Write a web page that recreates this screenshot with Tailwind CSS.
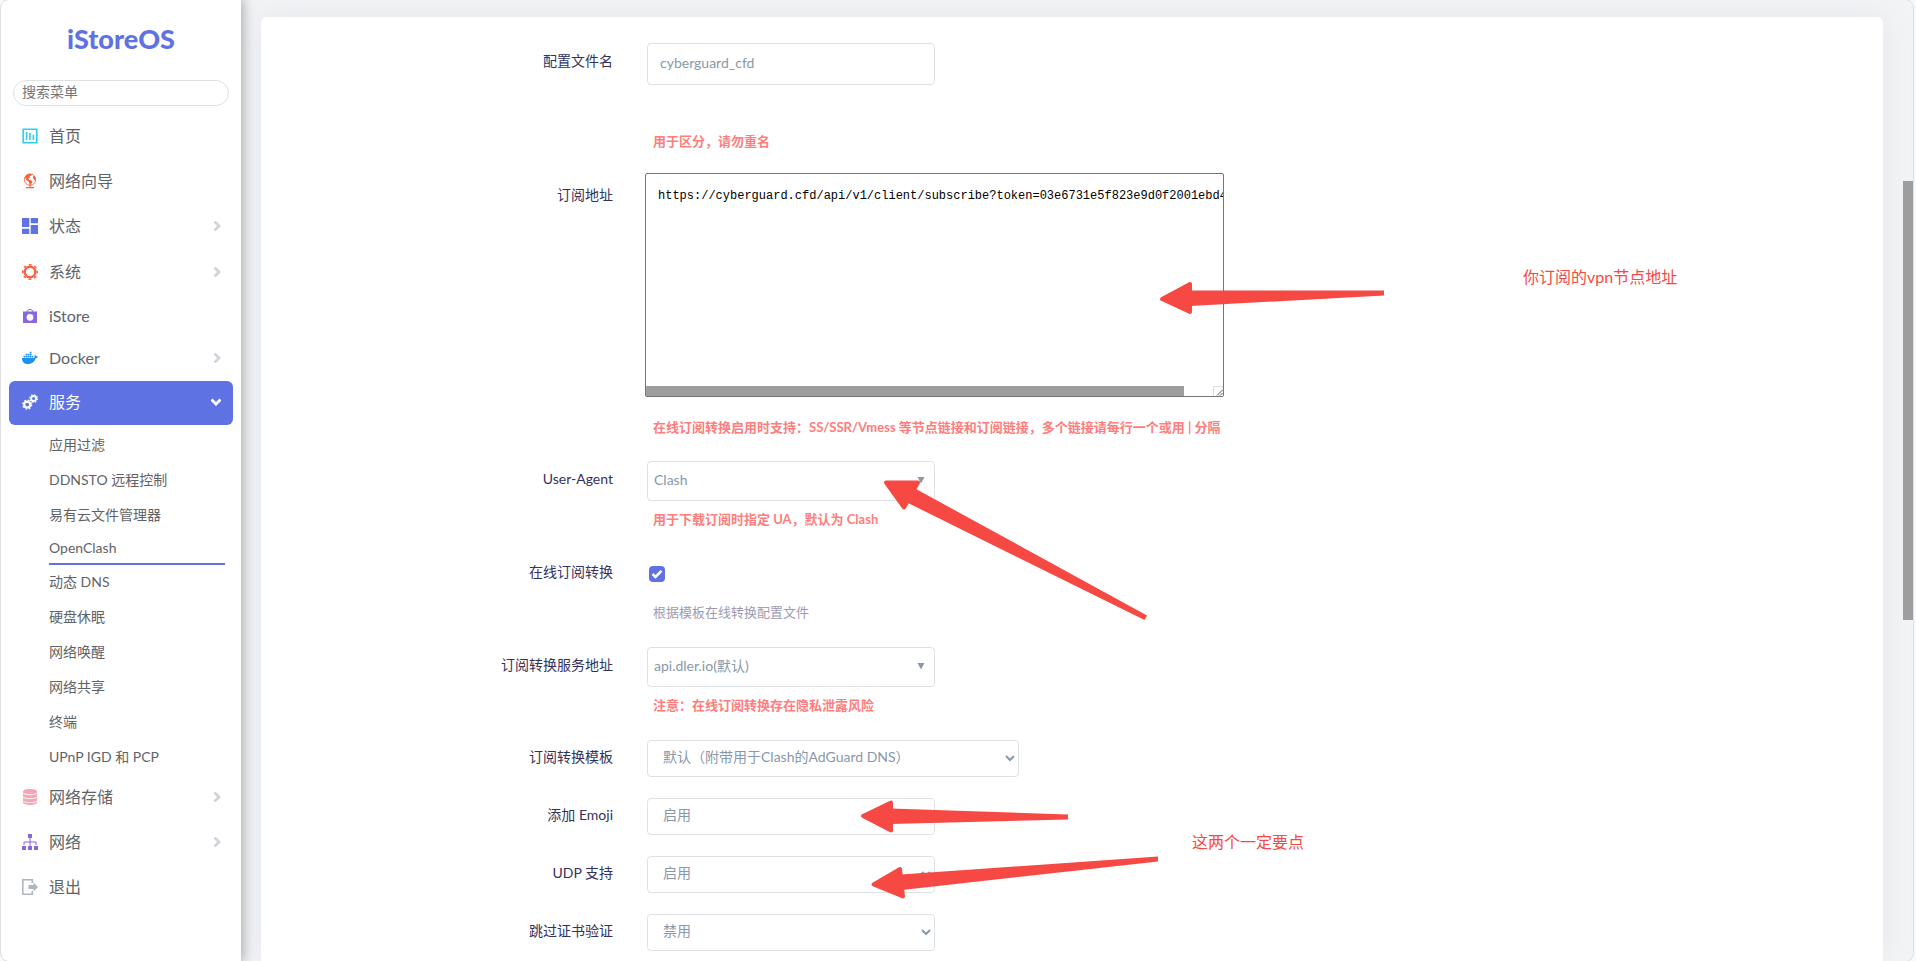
<!DOCTYPE html>
<html lang="zh-CN">

<head>
  <meta charset="UTF-8">
  <meta name="viewport" content="width=device-width, initial-scale=1.0">
  <title>iStoreOS - OpenClash</title>
  <script src="https://cdn.jsdelivr.net/npm/@tailwindcss/browser@4"></script>
</head>

<body class="h-screen overflow-hidden bg-[#f8f9fa] pl-px pr-[3px] font-[Lato,'Noto_Sans_CJK_SC',sans-serif] text-sm">
  <div class="flex h-full overflow-hidden rounded-lg bg-[#f3f4f6] shadow-[0_0_0_1px_#dfe0e2]">

    <!-- Sidebar -->
    <aside class="relative z-10 w-60 shrink-0 bg-white text-[#5f6368] shadow-[0_0_12px_2px_rgba(0,0,0,0.3)]">
      <a href="#" class="mt-4 block text-center text-[27px] leading-[46px] font-black text-[#5e72e4]">iStoreOS</a>
      <div class="px-3 pt-[18px]">
        <input type="search" aria-label="搜索菜单" placeholder="搜索菜单"
          class="block h-[26px] w-full rounded-full border border-[#dee2e6] px-2 pb-1 text-sm placeholder:text-[#757575]">
      </div>

      <nav class="mt-2 px-2 text-base">
        <a href="#" class="flex h-[45px] items-center gap-[11px] pr-3 pb-0.5 pl-[13px]">
          <svg class="size-4" viewBox="0 0 16 16" fill="none" stroke="#2dcef0">
            <path stroke-width="1.6" d="M1.2 1.2h13.6v13.600H1.2z" />
            <path stroke-width="1.6" d="M4.6 4v8M8 5v7M11.4 7v5" />
          </svg>
          首页
        </a>
        <a href="#" class="flex h-[45px] items-center gap-[11px] pr-3 pb-0.5 pl-[13px]">
          <svg class="size-4" viewBox="0 0 16 16">
            <circle cx="8" cy="6.600" r="5.700" fill="#fff" stroke="#fb6340" stroke-width=".9" />
            <path fill="#fb6340" d="M4 2.200 7.500.8l2.500.6-.8 1.400-1.600.4.4 1.800-2 .6 1.600 1.400 1.600.2 1.400 1.400-1 2-1.400 1.600-.8-.2-.2-2.200-1-1.600-2.200-1.400L3 4zM11 3l1.600.2 1.100 2.200-.2 2.400-1.500-1.400-1.200-1.200zM7.500 12h1v2H12v1.200H4V14h3.500z" />
          </svg>
          网络向导
        </a>
        <a href="#" class="flex h-[45px] items-center gap-[11px] pr-3 pb-0.5 pl-[13px]">
          <svg class="size-4" viewBox="0 0 16 16" fill="#5e72e4">
            <path d="M0 0h7.300v9H0zM8.700 0H16v5.300H8.700zM0 10.700h7.300V16H0zM8.700 7H16v9H8.700z" />
          </svg>
          <span class="flex-1">状态</span>
          <svg class="size-2.5" viewBox="0 0 10 10" fill="none" stroke="#ced4da" stroke-width="2.800"><path d="M3.500 .5 8 5 3.500 9.500" /></svg>
        </a>
        <a href="#" class="flex h-[45px] items-center gap-[11px] pr-3 pl-[13px]">
          <svg class="size-4" viewBox="0 0 16 16" fill="none" stroke="#fb6340">
            <circle cx="8" cy="8" r="5.300" stroke-width="2.400" />
            <circle cx="8" cy="8" r="7.200" stroke-width="1.600" stroke-dasharray="2.830 2.830" stroke-dashoffset="1.415" />
          </svg>
          <span class="flex-1">系统</span>
          <svg class="size-2.5" viewBox="0 0 10 10" fill="none" stroke="#ced4da" stroke-width="2.800"><path d="M3.500 .5 8 5 3.500 9.500" /></svg>
        </a>
        <a href="#" class="flex h-[43px] items-center gap-[11px] pr-3 pl-[13px]">
          <svg class="size-4" viewBox="0 0 16 16">
            <path fill="none" stroke="#8965e0" d="M5 4.500C5 .3 11 .3 11 4.500" />
            <path fill="#8965e0" d="M1 3.500h14V15H1z" />
            <circle cx="8" cy="9.300" r="3.400" fill="#fff" />
          </svg>
          iStore
        </a>
        <a href="#" class="flex h-11 items-center gap-[11px] pr-3 pb-0.5 pl-[13px]">
          <svg class="size-4" viewBox="0 0 16 16" fill="#1d90f0">
            <path d="M0 8h11.500c.8 0 1.200-.4 1-1.300-.2-.8.100-1.500.6-2 .6.500.9 1 1 1.700.7-.1 1.400 0 1.900.4-.4.900-1.200 1.400-2.300 1.400C12.500 12 9.800 14 6 14c-3.800 0-6-1.800-6-6z" />
            <path d="M1.500 5.700h1.700v1.700H1.500zM3.600 5.700h1.700v1.700H3.600zM5.700 5.700h1.700v1.700H5.700zM7.800 5.700h1.700v1.700H7.800zM9.900 5.700h1.400v1.700H9.900zM3.600 3.700h1.700v1.600H3.600zM5.700 3.700h1.700v1.600H5.700zM7.800 3.700h1.700v1.600H7.800zM7.800 1.700h1.700v1.600H7.800z" />
          </svg>
          <span class="flex-1">Docker</span>
          <svg class="size-2.5" viewBox="0 0 10 10" fill="none" stroke="#ced4da" stroke-width="2.800"><path d="M3.500 .5 8 5 3.500 9.500" /></svg>
        </a>
        <a href="#" class="flex h-11 items-center gap-[11px] rounded-md bg-[#5e72e4] pr-3 pb-0.5 pl-[13px] text-white">
          <svg class="size-4" viewBox="0 0 16 16" fill="none" stroke="#fff">
            <circle cx="5.200" cy="10.600" r="3" stroke-width="2.200" />
            <circle cx="5.200" cy="10.600" r="4.500" stroke-width="1.200" stroke-dasharray="1.770 1.770" />
            <circle cx="11.600" cy="4.500" r="2.500" stroke-width="1.800" />
            <circle cx="11.600" cy="4.500" r="3.800" stroke-width="1.200" stroke-dasharray="1.490 1.490" />
          </svg>
          <span class="flex-1">服务</span>
          <svg class="size-2.5" viewBox="0 0 10 10" fill="none" stroke="#fff" stroke-width="2.800"><path d="M.5 2.500 5 7l4.500-4.500" /></svg>
        </a>

        <ul class="mt-[3px] pr-2 pl-10 text-sm">
          <li><a href="#" class="flex h-[35px] items-center pb-0.5">应用过滤</a></li>
          <li><a href="#" class="flex h-[35px] items-center pb-0.5">DDNSTO 远程控制</a></li>
          <li><a href="#" class="flex h-[35px] items-center pb-0.5">易有云文件管理器</a></li>
          <li><a href="#" class="flex h-8 items-center border-b-2 border-[#5e72e4]">OpenClash</a></li>
          <li><a href="#" class="flex h-[35px] items-center pb-0.5">动态 DNS</a></li>
          <li><a href="#" class="flex h-[35px] items-center pb-0.5">硬盘休眠</a></li>
          <li><a href="#" class="flex h-[35px] items-center pb-0.5">网络唤醒</a></li>
          <li><a href="#" class="flex h-[35px] items-center pb-0.5">网络共享</a></li>
          <li><a href="#" class="flex h-[35px] items-center pb-0.5">终端</a></li>
          <li><a href="#" class="flex h-[35px] items-center pb-0.5">UPnP IGD 和 PCP</a></li>
        </ul>

        <a href="#" class="flex h-[45px] items-center gap-[11px] pr-3 pb-0.5 pl-[13px]">
          <svg class="size-4" viewBox="0 0 16 16">
            <path fill="#f5a5b5" d="M1 2.500C1-.8 15-.8 15 2.500v11c0 3.300-14 3.300-14 0z" />
            <path fill="none" stroke="#fff" stroke-width=".9" d="M1 4c1 2.200 13 2.200 14 0M1 8c1 2.200 13 2.200 14 0M1 12c1 2.200 13 2.200 14 0" />
          </svg>
          <span class="flex-1">网络存储</span>
          <svg class="size-2.5" viewBox="0 0 10 10" fill="none" stroke="#ced4da" stroke-width="2.800"><path d="M3.500 .5 8 5 3.500 9.500" /></svg>
        </a>
        <a href="#" class="flex h-[45px] items-center gap-[11px] pr-3 pb-0.5 pl-[13px]">
          <svg class="size-4" viewBox="0 0 16 16">
            <path fill="#8965e0" d="M6 0h4v4H6zM0 12h4v4H0zM6 12h4v4H6zM12 12h4v4h-4z" />
            <path fill="none" stroke="#8965e0" d="M8 4v8M2 11V8h12v3" />
          </svg>
          <span class="flex-1">网络</span>
          <svg class="size-2.5" viewBox="0 0 10 10" fill="none" stroke="#ced4da" stroke-width="2.800"><path d="M3.500 .5 8 5 3.500 9.500" /></svg>
        </a>
        <a href="#" class="flex h-[45px] items-center gap-[11px] pr-3 pb-0.5 pl-[13px]">
          <svg class="size-4" viewBox="0 0 16 16">
            <path fill="none" stroke="#adb5bd" stroke-width="1.600" d="M10.300 4V.8H.8v14.400h9.500V12" />
            <path fill="#adb5bd" d="M6.500 6h5V3.500L16 8l-4.500 4.500V10h-5z" />
          </svg>
          退出
        </a>
      </nav>
    </aside>

    <!-- Subscription form -->
    <main class="min-w-0 flex-1 pt-[17px] pr-[30px] pl-5">
      <form class="relative flex h-full flex-col gap-[21px] rounded-t-md bg-white pt-[26px] text-[#32325d] shadow-[0_0_32px_rgba(136,152,170,0.15)]">

        <div class="flex gap-8">
          <label for="name" class="w-[352px] shrink-0 pt-2 text-right leading-5">配置文件名</label>
          <div>
            <input id="name" type="text" value="cyberguard_cfd"
              class="ml-0.5 block h-[42px] w-72 rounded-sm border border-[#dee2e6] px-3 pb-1 text-[#8898aa]">
            <p class="mt-[46px] pb-px pl-2 text-[13px] leading-5 font-bold text-[#ff7d7d]">用于区分，请勿重名</p>
          </div>
        </div>

        <div class="flex gap-8">
          <label for="address" class="w-[352px] shrink-0 pt-3 text-right leading-5">订阅地址</label>
          <div>
            <div class="flex h-56 w-[579px] flex-col rounded-xs border border-[#767676]">
              <textarea id="address" wrap="off" spellcheck="false"
                class="block min-h-0 w-full flex-1 resize-none overflow-hidden pt-3 pl-3 font-['Liberation_Mono','Noto_Sans_CJK_SC',monospace] text-xs leading-5 text-black">https://cyberguard.cfd/api/v1/client/subscribe?token=03e6731e5f823e9d0f2001ebd4d7</textarea>
              <div class="flex h-2.5 justify-between">
                <div class="w-[538px] bg-[#9e9e9e]"></div>
                <svg class="size-2.5 border-t border-l border-[#dcdcdc]" viewBox="0 0 9 9" stroke="#555"><path d="M3 8.500 8.500 3M6 8.500 8.500 6" /></svg>
              </div>
            </div>
            <p class="mt-5 pb-[3px] pl-2 text-[13px] leading-5 font-bold text-[#ff7d7d]">在线订阅转换启用时支持：SS/SSR/Vmess 等节点链接和订阅链接，多个链接请每行一个或用 | 分隔</p>
          </div>
        </div>

        <div class="flex gap-8">
          <label for="ua" class="w-[352px] shrink-0 pt-2 text-right leading-5">User-Agent</label>
          <div>
            <div class="relative ml-0.5 w-72">
              <select id="ua" class="block h-10 w-full appearance-none rounded-sm border border-[#dee2e6] pr-8 pb-0.5 pl-1.5 text-[#8898aa]">
                <option>Clash</option>
              </select>
              <svg class="pointer-events-none absolute top-[15px] right-2.5 size-2" viewBox="0 0 8 8" fill="#8898aa"><path d="M.5 1h7L4 7.500z" /></svg>
            </div>
            <p class="mt-2 pb-1 pl-2 text-[13px] leading-5 font-bold text-[#ff7d7d]">用于下载订阅时指定 UA，默认为 Clash</p>
          </div>
        </div>

        <div class="flex gap-8">
          <label for="convert" class="w-[352px] shrink-0 pt-2 text-right leading-5">在线订阅转换</label>
          <div>
            <div class="relative mt-3 ml-1 size-4">
              <input id="convert" type="checkbox" checked class="block size-4 appearance-none rounded-sm bg-[#5e72e4]">
              <svg class="pointer-events-none absolute inset-0 size-4" viewBox="0 0 16 16" fill="none" stroke="#fff" stroke-width="2.600"><path d="m3.500 8 3 3 6-6.200" /></svg>
            </div>
            <p class="mt-5 pb-1 pl-2 text-[13px] leading-5 text-[#9d9bb3]">根据模板在线转换配置文件</p>
          </div>
        </div>

        <div class="flex gap-8">
          <label for="server" class="w-[352px] shrink-0 pt-2 text-right leading-5">订阅转换服务地址</label>
          <div>
            <div class="relative ml-0.5 w-72">
              <select id="server" class="block h-10 w-full appearance-none rounded-sm border border-[#dee2e6] pr-8 pb-0.5 pl-1.5 text-[#8898aa]">
                <option>api.dler.io(默认)</option>
              </select>
              <svg class="pointer-events-none absolute top-[15px] right-2.5 size-2" viewBox="0 0 8 8" fill="#8898aa"><path d="M.5 1h7L4 7.500z" /></svg>
            </div>
            <p class="mt-2 pb-1 pl-2 text-[13px] leading-5 font-bold text-[#ff7d7d]">注意：在线订阅转换存在隐私泄露风险</p>
          </div>
        </div>

        <div class="flex gap-8">
          <label for="template" class="w-[352px] shrink-0 pt-[7px] text-right leading-5">订阅转换模板</label>
          <div class="relative ml-0.5 w-[372px]">
            <select id="template" class="block h-[37px] w-full appearance-none rounded-sm border border-[#dee2e6] pr-8 pb-[3px] pl-[15px] text-[#8898aa]">
              <option>默认（附带用于Clash的AdGuard DNS）</option>
            </select>
            <svg class="pointer-events-none absolute top-[13px] right-1 size-2.5" viewBox="0 0 10 10" fill="none" stroke="#8898aa" stroke-width="2"><path d="M1 3 5 7l4-4" /></svg>
          </div>
        </div>

        <div class="flex gap-8">
          <label for="emoji" class="w-[352px] shrink-0 pt-[7px] text-right leading-5">添加 Emoji</label>
          <div class="relative ml-0.5 w-72">
            <select id="emoji" class="block h-[37px] w-full appearance-none rounded-sm border border-[#dee2e6] pr-8 pb-[3px] pl-[15px] text-[#8898aa]">
              <option>启用</option>
            </select>
            <svg class="pointer-events-none absolute top-[13px] right-1 size-2.5" viewBox="0 0 10 10" fill="none" stroke="#8898aa" stroke-width="2"><path d="M1 3 5 7l4-4" /></svg>
          </div>
        </div>

        <div class="flex gap-8">
          <label for="udp" class="w-[352px] shrink-0 pt-[7px] text-right leading-5">UDP 支持</label>
          <div class="relative ml-0.5 w-72">
            <select id="udp" class="block h-[37px] w-full appearance-none rounded-sm border border-[#dee2e6] pr-8 pb-[3px] pl-[15px] text-[#8898aa]">
              <option>启用</option>
            </select>
            <svg class="pointer-events-none absolute top-[13px] right-1 size-2.5" viewBox="0 0 10 10" fill="none" stroke="#8898aa" stroke-width="2"><path d="M1 3 5 7l4-4" /></svg>
          </div>
        </div>

        <div class="flex gap-8">
          <label for="cert" class="w-[352px] shrink-0 pt-[7px] text-right leading-5">跳过证书验证</label>
          <div class="relative ml-0.5 w-72">
            <select id="cert" class="block h-[37px] w-full appearance-none rounded-sm border border-[#dee2e6] pr-8 pb-[3px] pl-[15px] text-[#8898aa]">
              <option>禁用</option>
            </select>
            <svg class="pointer-events-none absolute top-[13px] right-1 size-2.5" viewBox="0 0 10 10" fill="none" stroke="#8898aa" stroke-width="2"><path d="M1 3 5 7l4-4" /></svg>
          </div>
        </div>

        <!-- Red arrows and notes over the form -->
        <svg class="pointer-events-none absolute top-0 left-0 h-[944px] w-[1200px]" viewBox="261 17 1200 944" fill="#f64944" stroke="#f64944" stroke-linejoin="round">
          <path stroke-width="4" d="M1162 299 1190 284v28z" />
          <path stroke="none" d="M1190 290.500h194v5L1190 306z" />
          <path stroke-width="4" d="M886 482.500 918 482.500 904 507.500z" />
          <path stroke="none" d="M916 489 1147 615.500l-2.500 4.500L908 503z" />
          <path stroke-width="4" d="M863 816 891 802.500v28z" />
          <path stroke="none" d="M891 808.500 1068 814.500v5L891 824z" />
          <path stroke-width="4" d="M873.500 884.500 900 869l3 27.500z" />
          <path stroke="none" d="M901 874.500 1158 856.500v5L902 890z" />
        </svg>
        <p class="absolute top-[248px] left-[1262px] text-base text-[#f64944]">你订阅的vpn节点地址</p>
        <p class="absolute top-[813px] left-[931px] text-base text-[#f64944]">这两个一定要点</p>
      </form>
    </main>

    <!-- Page scrollbar thumb -->
    <div class="absolute top-[181px] right-[3px] h-[439px] w-2.5 bg-[#9e9e9e]"></div>
  </div>
</body>

</html>
